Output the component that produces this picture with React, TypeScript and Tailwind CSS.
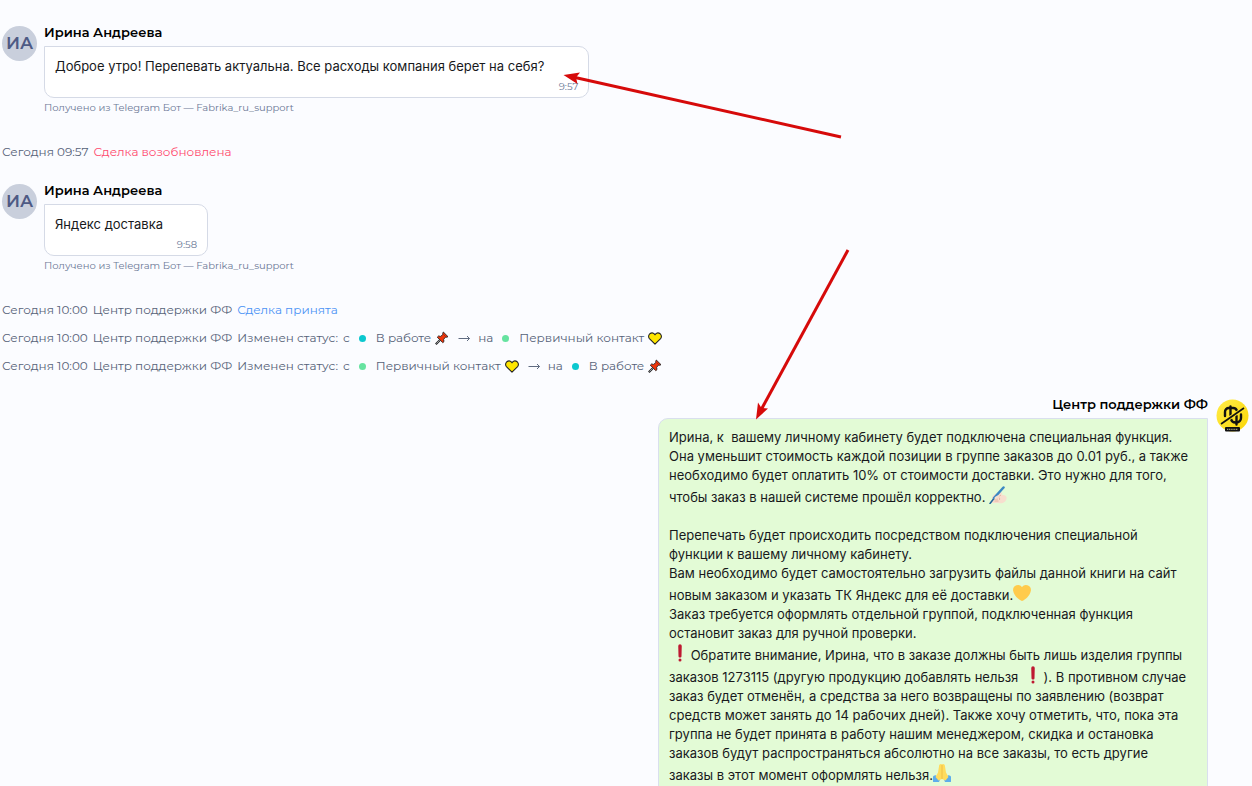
import type { ReactNode } from 'react';
import clsx from 'clsx';

type IconProps = { className?: string };

function PinIcon({ className }: IconProps) {
  return (
    <svg viewBox="0 0 14 14" className={clsx('inline-block size-[14px]', className)} aria-hidden="true">
      <path d="M5 9 0.8 13.2" stroke="#222" strokeWidth="2" />
      <path d="M4.8 9.2 1.4 12.6" stroke="#b8bcc4" strokeWidth="0.8" />
      <path
        d="M8.3 1 13 5.7l-1.5.6-.9-.2-2 2.2.4 2.2-1.2 1.2-5.5-5.5 1.2-1.2 2.2.4 2.2-2-.2-.9z"
        fill="#f0350a"
        stroke="#222"
        strokeWidth="0.9"
        strokeLinejoin="round"
      />
      <path d="m8.6 3.6 2 2" stroke="#8f1a08" strokeWidth="0.6" />
    </svg>
  );
}

function YellowHeartIcon({ className }: IconProps) {
  return (
    <svg viewBox="0 0 14 13" className={clsx('inline-block h-[13px] w-[14px]', className)} aria-hidden="true">
      <path
        d="M7 12.2 1.4 6.6C.2 5.2.4 3 1.8 1.8 3.3.6 5.4.8 6.5 2.1L7 2.8l.5-.7C8.6.8 10.7.6 12.2 1.8c1.4 1.2 1.6 3.4.4 4.8z"
        fill="#ffe600"
        stroke="#222"
        strokeWidth="1.1"
        strokeLinejoin="round"
      />
    </svg>
  );
}

function HeartEmoji() {
  return (
    <svg viewBox="0 0 36 36" className="mt-px inline-block size-[18px] align-[-2px]" role="img" aria-label="heart">
      <path
        fill="#ffcb4c"
        d="M35.9 11.8a9.9 9.9 0 0 0-17.9-5.7A9.9 9.9 0 0 0 .1 11.8c0 .8.1 1.5.3 2.2C1.7 22.6 11.2 31.6 18 34c6.8-2.4 16.3-11.4 17.6-20 .2-.7.3-1.4.3-2.2z"
      />
    </svg>
  );
}

function WritingEmoji() {
  return (
    <svg viewBox="0 0 36 36" className="mt-px inline-block size-[18px] align-[-2px]" role="img" aria-label="writing hand">
      <path
        fill="#f7dece"
        d="M6 23c1-4 5-7 9-8l7-2c3-1 5 1 4 3l-2 2c4-1 9 1 11 4 1 3-1 8-4 10-3 3-8 3-12 2H8c-3 0-4-3-2-5z"
      />
      <path fill="none" stroke="#e0aa94" strokeWidth="1.5" d="M17 22c4 0 5 3 4 6M10 26h8M11 30h8M24 18l-5 4" />
      <path stroke="#226699" strokeWidth="3" strokeLinecap="round" d="M2 35l7-9" />
      <path stroke="#3b88c3" strokeWidth="5" strokeLinecap="round" d="M10 24 29 3" />
      <path fill="#f7dece" d="M12 22c3-3 8-4 9-2s-3 5-7 6c-3 1-4-2-2-4z" />
    </svg>
  );
}

function ExclamationEmoji() {
  return (
    <svg viewBox="0 0 36 36" className="mt-px inline-block size-[18px] align-[-2px]" role="img" aria-label="exclamation mark">
      <circle fill="#be1931" cx="22" cy="32" r="3" />
      <path fill="#be1931" d="M22 27c-2 0-3-1-3-3L18.5 4a3.5 3.5 0 0 1 7 0L25 24c0 2-1 3-3 3z" />
    </svg>
  );
}

function PrayEmoji() {
  return (
    <svg viewBox="0 0 36 36" className="mt-px inline-block size-[18px] align-[-2px]" role="img" aria-label="folded hands">
      <path fill="#5dadec" d="m6 23 8 8-2 5H1c-1 0-1-1-1-2v-8c0-2 4-4 6-3zM30 23l-8 8 2 5h11c1 0 1-1 1-2v-8c0-2-4-4-6-3z" />
      <path fill="#ffdc5d" d="M16 0c-3 0-4 2-4 5l-2 12-5 9 6 7 7-3 7 3 6-7-5-9-2-12c0-3-1-5-4-5-1 0-2 1-2 2 0-1-1-2-2-2z" />
      <path fill="none" stroke="#e9b63f" strokeWidth="1.5" d="M18 2v28" />
    </svg>
  );
}

function SupportAvatar() {
  return (
    <svg viewBox="0 0 33 33" className="size-[33px] shrink-0" role="img" aria-label="Центр поддержки ФФ">
      <defs>
        <linearGradient id="avatar-fill" x1="0" y1="0" x2="1" y2="1">
          <stop offset="0" stopColor="#ffed4a" />
          <stop offset="1" stopColor="#fbd504" />
        </linearGradient>
      </defs>
      <circle cx="16.5" cy="16.5" r="16" fill="url(#avatar-fill)" />
      <g fill="none" stroke="#111" strokeWidth="2.4" strokeLinecap="round">
        <path d="M9 17v-4a3.8 3.8 0 0 1 4-4h4a4 4 0 0 1 4 3M14.5 7.500V16" />
        <path d="M25 15.500V19a4.500 4.500 0 0 1-4.500 4.500h-1A4.500 4.500 0 0 1 15 20M20.500 17v8.500" />
      </g>
      <path d="M5 25 28 9" stroke="#ffe32a" strokeWidth="3.5" />
      <path d="M5 25 28 9" stroke="#111" strokeWidth="1.6" />
      <rect x="9" y="28" width="15" height="4.5" rx="1" fill="#111" />
      <path d="M11 30.3h11" stroke="#bdb98a" strokeWidth="1" strokeDasharray="1.2 .6" />
    </svg>
  );
}

type IncomingMessageProps = {
  text: string;
  time: string;
};

function IncomingMessage({ text, time }: IncomingMessageProps) {
  return (
    <article className="flex gap-[7px] pl-0.5">
      <div className="mt-0.5 flex size-[35px] shrink-0 items-center justify-center rounded-full bg-[#c9cfdc] text-[17px] font-semibold text-[#4e5a84]">
        ИА
      </div>
      <div className="flex min-w-0 flex-col items-start">
        <h2 className="mb-1.5 text-[13px] leading-4 font-semibold text-black">Ирина Андреева</h2>
        <div className="flex h-[52px] flex-col rounded-[10px] rounded-tl-none border border-[#d5dae6] bg-white px-2.5 pt-2.5">
          <p className="pr-[34px] font-['Inter',sans-serif] text-[13px] leading-[19px] text-[#18191c]">{text}</p>
          <time className="self-end pt-1 text-[10px] leading-[14px] text-[#6b7896]">{time}</time>
        </div>
        <p className="mt-0.5 text-[10px] leading-4 text-[#6b7896]">Получено из Telegram Бот — Fabrika_ru_support</p>
      </div>
    </article>
  );
}

function EventRow({ time, children }: { time: string; children: ReactNode }) {
  return (
    <div className="flex h-5 items-center gap-[5px] pl-0.5 text-[12px] leading-5 whitespace-nowrap text-[#566278]">
      <time>Сегодня {time}</time>
      {children}
    </div>
  );
}

function Status({ kind }: { kind: 'work' | 'contact' }) {
  const isWork = kind === 'work';
  return (
    <span className="flex items-center">
      <span className={clsx('mr-2.5 ml-1 size-[7px] rounded-full', isWork ? 'bg-[#0cc8cf]' : 'bg-[#66e3a0]')} />
      {isWork ? 'В работе' : 'Первичный контакт'}
      {isWork ? <PinIcon className="ml-1" /> : <YellowHeartIcon className="ml-1" />}
    </span>
  );
}

function StatusChange({ from, to }: { from: 'work' | 'contact'; to: 'work' | 'contact' }) {
  return (
    <EventRow time="10:00">
      <span>Центр поддержки ФФ</span>
      <span>Изменен статус:</span>
      <span>с</span>
      <Status kind={from} />
      <svg viewBox="0 0 13 9" className="mr-0.5 ml-1 h-[9px] w-[13px]" fill="none" stroke="#5f6b80" aria-hidden="true">
        <path d="M0.5 4.5h11M9 2l2.5 2.5L9 7" />
      </svg>
      <span>на</span>
      <Status kind={to} />
    </EventRow>
  );
}

const REPLY_LINES: ReactNode[] = [
  'Ирина, к  вашему личному кабинету будет подключена специальная функция.',
  'Она уменьшит стоимость каждой позиции в группе заказов до 0.01 руб., а также',
  'необходимо будет оплатить 10% от стоимости доставки. Это нужно для того,',
  <>чтобы заказ в нашей системе прошёл корректно. <WritingEmoji /></>,
  '',
  'Перепечать будет происходить посредством подключения специальной',
  'функции к вашему личному кабинету.',
  'Вам необходимо будет самостоятельно загрузить файлы данной книги на сайт',
  <>новым заказом и указать ТК Яндекс для её доставки.<HeartEmoji /></>,
  'Заказ требуется оформлять отдельной группой, подключенная функция',
  'остановит заказ для ручной проверки.',
  <><ExclamationEmoji /> Обратите внимание, Ирина, что в заказе должны быть лишь изделия группы</>,
  <>заказов 1273115 (другую продукцию добавлять нельзя <ExclamationEmoji /> ). В противном случае</>,
  'заказ будет отменён, а средства за него возвращены по заявлению (возврат',
  'средств может занять до 14 рабочих дней). Также хочу отметить, что, пока эта',
  'группа не будет принята в работу нашим менеджером, скидка и остановка',
  'заказов будут распространяться абсолютно на все заказы, то есть другие',
  <>заказы в этот момент оформлять нельзя.<PrayEmoji /></>,
];

function OutgoingMessage() {
  return (
    <article className="flex justify-end gap-2 pr-[3px]">
      <div className="flex max-w-[550px] grow flex-col">
        <h2 className="mb-1.5 self-end text-[13px] leading-4 font-semibold text-black">Центр поддержки ФФ</h2>
        <div className="rounded-[10px] rounded-tr-none border border-[#d9dfee] bg-[#e3fbd6] px-2.5 pt-[9px] pb-6 font-['Inter',sans-serif] text-[13px] leading-[19px] whitespace-pre text-[#18191c]">
          {REPLY_LINES.map((line, i) => (
            <p key={i} className="min-h-[19px]">
              {line}
            </p>
          ))}
        </div>
      </div>
      <div className="pt-[3px]">
        <SupportAvatar />
      </div>
    </article>
  );
}

// Стрелки-пометки поверх переписки
function Annotations() {
  return (
    <svg width="1252" height="786" className="pointer-events-none absolute top-0 left-0" fill="#d60a0a" aria-hidden="true">
      <path d="M841 137 574 77.2" stroke="#d60a0a" strokeWidth="3" />
      <path d="m563.500 75 16.500-2.500-4 5 1.500 6.500z" />
      <path d="M848 250 761 410" stroke="#d60a0a" strokeWidth="3" />
      <path d="m756 419.500 2-17 3.500 5.500 6.500.5z" />
    </svg>
  );
}

export default function App() {
  return (
    <main className="relative h-screen overflow-hidden bg-[#fbfcff] pt-6 font-['Montserrat','Inter',sans-serif]">
      <IncomingMessage text="Доброе утро! Перепевать актуальна. Все расходы компания берет на себя?" time="9:57" />
      <div className="pt-[26px] pb-5">
        <EventRow time="09:57">
          <span className="text-[#ff4a6e]">Сделка возобновлена</span>
        </EventRow>
      </div>
      <IncomingMessage text="Яндекс доставка" time="9:58" />
      <div className="flex flex-col gap-2 pt-[26px] pb-5">
        <EventRow time="10:00">
          <span>Центр поддержки ФФ</span>
          <span className="text-[#4a92f5]">Сделка принята</span>
        </EventRow>
        <StatusChange from="work" to="contact" />
        <StatusChange from="contact" to="work" />
      </div>
      <OutgoingMessage />
      <Annotations />
    </main>
  );
}
